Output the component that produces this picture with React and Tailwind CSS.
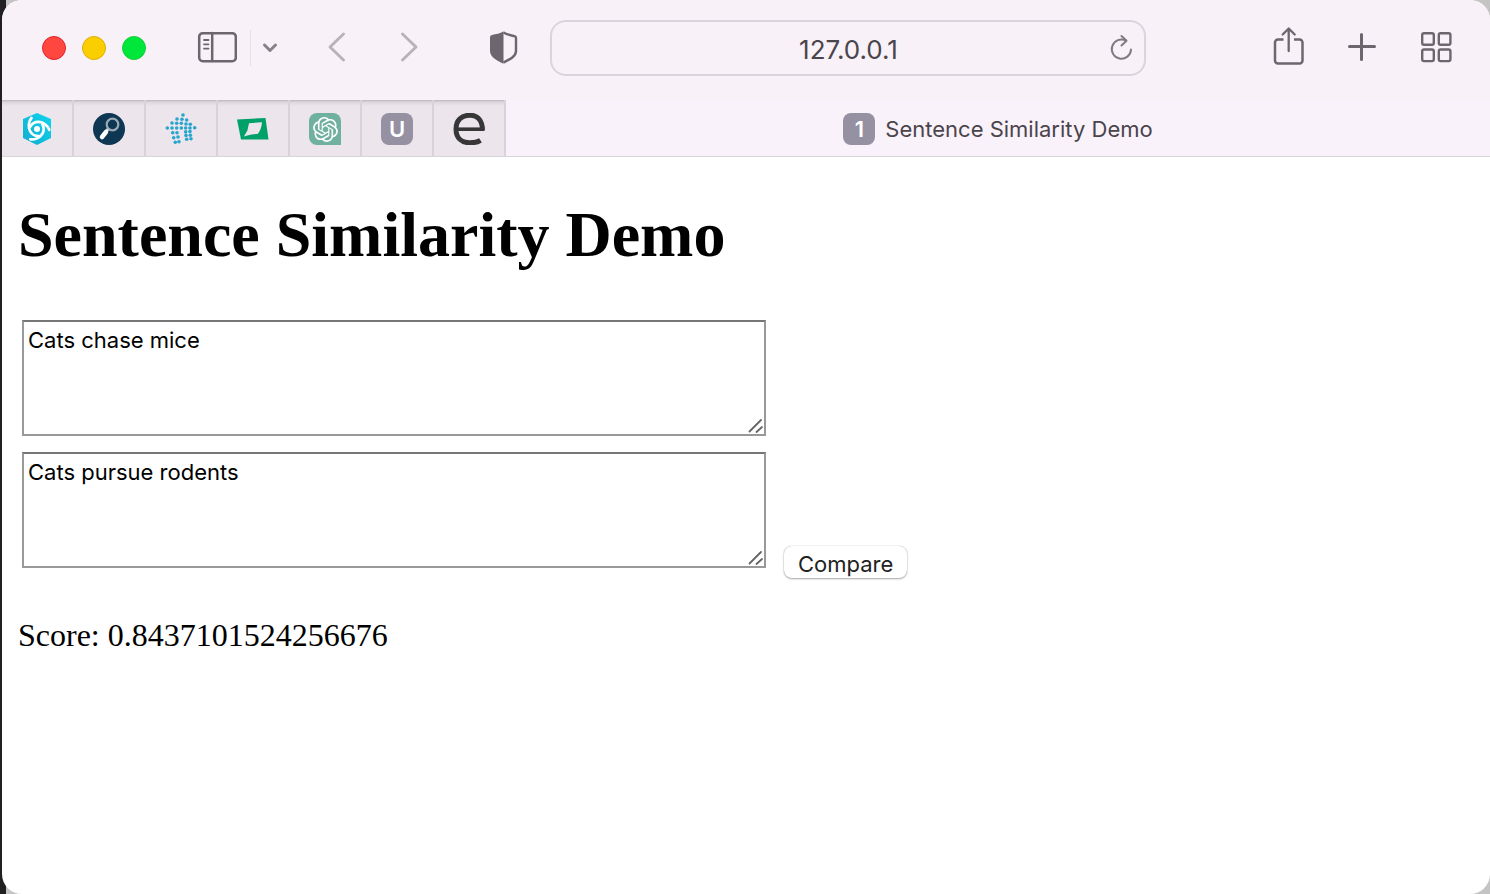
import { SiOpenai } from "react-icons/si";

const dots = [
  [18, 2], [12, 6], [17, 6.3], [21.7, 7],
  [7, 10], [11.7, 10.3], [16.3, 10.3], [21, 11], [25.3, 11.3],
  [2.3, 15], [7, 15], [11.7, 15], [16.3, 15], [20.7, 15], [25, 15], [29.7, 14.7],
  [7.7, 19.7], [12, 19.7], [20.7, 18.9], [25, 18.6], [21, 22.5], [25.3, 22.2],
  [8.7, 24.7], [13, 24], [21.7, 26.3], [26, 25.7], [10.3, 29.3], [14, 28.7],
];

function HexIcon() {
  return (
    <svg width="32" height="32" viewBox="0 0 32 32" fill="none">
      <defs>
        <linearGradient id="hex" x1="0" y1="1" x2="1" y2="0">
          <stop offset="0" stopColor="#12acd0" />
          <stop offset="1" stopColor="#0fd5ec" />
        </linearGradient>
      </defs>
      <path d="M16 0 30 6v19l-14 7L2 25V6Z" fill="url(#hex)" />
      <circle cx="16" cy="16" r="3" fill="#fff" />
      <g stroke="#fff" strokeWidth="2.700" strokeLinecap="round">
        <path d="M10.500 5C7.500 8.500 7 14 9 18c1.500 3 4.500 5 8.500 5" />
        <path d="M10.500 5C7.500 8.500 7 14 9 18c1.500 3 4.500 5 8.500 5" transform="rotate(120 16 16)" />
        <path d="M10.500 5C7.500 8.500 7 14 9 18c1.500 3 4.500 5 8.500 5" transform="rotate(240 16 16)" />
      </g>
    </svg>
  );
}

function LensIcon() {
  return (
    <svg width="32" height="32" viewBox="0 0 32 32" fill="none">
      <circle cx="16" cy="16" r="16" fill="#0d3753" />
      <circle cx="19.500" cy="11.500" r="5.800" stroke="#9aa9b4" strokeWidth="2.200" />
      <path d="m15 16-2 3" stroke="#d9dfe3" strokeWidth="3" />
      <path d="m13 19-4 5" stroke="#fff" strokeWidth="4.500" strokeLinecap="round" />
    </svg>
  );
}

function DotsIcon() {
  return (
    <svg width="32" height="32" viewBox="0 0 32 32" fill="#27a5cf">
      {dots.map(([x, y]) => (
        <circle key={`${x}-${y}`} cx={x} cy={y} r="1.800" />
      ))}
    </svg>
  );
}

function FlagIcon() {
  return (
    <svg width="32" height="32" viewBox="0 0 32 32">
      <path d="M0 6.500 28.500 5 31.500 26.500H4Z" fill="#00a069" />
      <path d="M12 10.200 25 9.200c-.4 5-1.700 8.500-4.300 11.800-4 .1-8.200.6-13.700 2.600 1.200-2.800 2.600-4.200 3.400-6Z" fill="#ece6ec" />
    </svg>
  );
}

function ChatIcon() {
  return (
    <span className="flex size-8 items-center justify-center rounded-lg rounded-br-none bg-[#70b09e] text-white">
      <SiOpenai size={25} />
    </span>
  );
}

function LetterIcon({ children }) {
  return (
    <span className="flex size-8 shrink-0 items-center justify-center rounded-lg bg-[#9591a3] text-[22px] leading-none font-semibold text-white">
      {children}
    </span>
  );
}

function EIcon() {
  return (
    <svg width="32" height="32" viewBox="0 0 32 32" fill="none" stroke="#373737">
      <path d="M3 16.200h28" strokeWidth="3.600" />
      <path d="M29.500 17.500C29.500 8 25 2.200 17 2.200 8 2.200 3 8 3 16c0 9 5.500 13.800 14 13.800 4 0 7.500-.6 10.500-2.500" strokeWidth="5" />
    </svg>
  );
}

const pinned = [
  ["Hexagon site", <HexIcon />],
  ["Search site", <LensIcon />],
  ["Dots site", <DotsIcon />],
  ["Green site", <FlagIcon />],
  ["ChatGPT", <ChatIcon />],
  ["U site", <LetterIcon>U</LetterIcon>],
  ["E site", <EIcon />],
];

function Toolbar() {
  return (
    <header className="flex h-[100px] items-center bg-[#f8f1f8] pr-[38px] pb-1 pl-10 text-[#6e666e]">
      <div className="flex gap-4">
        <button aria-label="Close" className="size-6 rounded-full border border-[#e0242b] bg-[#ff473f]" />
        <button aria-label="Minimize" className="size-6 rounded-full border border-[#dfae0c] bg-[#fbce00]" />
        <button aria-label="Zoom" className="size-6 rounded-full border border-[#12cf38] bg-[#00e73c]" />
      </div>
      <button aria-label="Show sidebar" className="ml-[51px]">
        <svg width="40" height="34" viewBox="0 0 40 34" fill="none" stroke="currentColor" strokeWidth="2.500" strokeLinecap="round">
          <rect x="2.200" y="2.200" width="36.600" height="28" rx="3.500" />
          <path d="M15.200 2v28" />
          <path d="M7 9h4.500M7 13.300h4.500M7 17.600h4.500" strokeWidth="1.800" />
        </svg>
      </button>
      <span className="ml-[13px] h-9 w-px bg-[#e8e0e8]" />
      <button aria-label="Sidebar options" className="ml-2.5 text-[#88818a]">
        <svg width="18" height="16" viewBox="0 0 18 16" fill="none" stroke="currentColor" strokeWidth="3" strokeLinecap="round" strokeLinejoin="round">
          <path d="m3.500 5 5.500 5.500L14.500 5" />
        </svg>
      </button>
      <button aria-label="Back" className="ml-[47px] text-[#b9b2b9]">
        <svg width="20" height="34" viewBox="0 0 20 34" fill="none" stroke="currentColor" strokeWidth="2.900" strokeLinecap="round" strokeLinejoin="round">
          <path d="M17.500 3 4 16l13.500 13" />
        </svg>
      </button>
      <button aria-label="Forward" className="ml-[53px] text-[#b9b2b9]">
        <svg width="20" height="34" viewBox="0 0 20 34" fill="none" stroke="currentColor" strokeWidth="2.900" strokeLinecap="round" strokeLinejoin="round">
          <path d="M3.500 3 17 16 3.500 29" />
        </svg>
      </button>
      <button aria-label="Privacy report" className="ml-[69px]">
        <svg width="30" height="34" viewBox="0 0 30 34" fill="none">
          <path d="M15.500.2C12 2.500 8 3 4 4c-1 .2-2 1-2 2.200V20c0 6.500 8 10 13.500 12.800Z" fill="currentColor" />
          <path d="M15.500 1.500c3.500 2.200 7.500 2.700 11 3.700.7.200 1.500.8 1.500 1.800v13c0 5.500-6.500 8.500-12.500 11.500" stroke="currentColor" strokeWidth="2.400" />
        </svg>
      </button>
      <div className="ml-8 flex h-14 flex-1 items-center rounded-2xl border-2 border-[#dcd4dc] pr-[11px] pl-9">
        <input
          aria-label="Address"
          defaultValue="127.0.0.1"
          className="h-10 min-w-0 flex-1 bg-transparent pt-0.5 text-center text-[26px] text-[#4a444b] outline-none"
        />
        <button aria-label="Reload" className="text-[#817a82]">
          <svg width="24" height="28" viewBox="0 0 24 28" fill="none" stroke="currentColor" strokeWidth="2" strokeLinecap="round" strokeLinejoin="round">
            <path d="M22 15.500A9.600 9.600 0 1 1 17 6.700" />
            <path d="M12.500 2 17.500 6.700 12.500 11.500" />
          </svg>
        </button>
      </div>
      <button aria-label="Share" className="ml-[127px] pb-1">
        <svg width="31" height="40" viewBox="0 0 31 40" fill="none" stroke="currentColor" strokeWidth="2.500" strokeLinecap="round" strokeLinejoin="round">
          <path d="M10.500 13.500H5a3 3 0 0 0-3 3v18a3 3 0 0 0 3 3h21.500a3 3 0 0 0 3-3v-18a3 3 0 0 0-3-3H21" strokeLinecap="butt" />
          <path d="M15.700 25V3M9.700 8.500l6-6 6 6" strokeWidth="2.300" />
        </svg>
      </button>
      <button aria-label="New tab" className="ml-11">
        <svg width="28" height="30" viewBox="0 0 28 30" fill="none" stroke="currentColor" strokeWidth="3" strokeLinecap="round">
          <path d="M13.500 1.500v25M1.500 13.500h25" />
        </svg>
      </button>
      <button aria-label="Tab overview" className="ml-[45px]">
        <svg width="31" height="32" viewBox="0 0 31 32" fill="none" stroke="currentColor" strokeWidth="2.400">
          <rect x="1.200" y="1.200" width="11.600" height="11.600" rx="1.800" />
          <rect x="17.800" y="1.200" width="11.600" height="11.600" rx="1.800" />
          <rect x="1.200" y="17.500" width="11.600" height="11.600" rx="1.800" />
          <rect x="17.800" y="17.500" width="11.600" height="11.600" rx="1.800" />
        </svg>
      </button>
    </header>
  );
}

function TabBar() {
  return (
    <nav aria-label="Tabs" className="flex h-[57px] border-b border-[#d8d5d8] bg-[#faf2fa]">
      {pinned.map(([name, icon]) => (
        <button
          key={name}
          aria-label={name}
          className="flex w-[72px] shrink-0 items-center justify-center border-r-2 border-[#dad2da] bg-[#ece6ec] bg-[linear-gradient(#bdb6bd,#dcd5dc_2px,#ece6ec_6px)] pt-0.5"
        >
          {icon}
        </button>
      ))}
      <button className="flex flex-1 items-center justify-center gap-2.5 pt-0.5 text-[22px] text-[#4a444b]">
        <LetterIcon>1</LetterIcon>
        Sentence Similarity Demo
      </button>
    </nav>
  );
}

function SentenceBox({ label, value }) {
  return (
    <div className="relative m-1 h-[116px] w-[744px] max-w-full">
      <textarea
        aria-label={label}
        defaultValue={value}
        className="block size-full resize-none border-2 border-[#999] border-t-[#767676] bg-white px-1 py-1 font-[Inter,sans-serif] text-[22px] leading-7 text-black outline-none"
      />
      <svg className="pointer-events-none absolute right-[3px] bottom-[3px]" width="15" height="14" viewBox="0 0 15 14" stroke="#666" strokeWidth="1.800" strokeLinecap="round">
        <path d="M1.500 12.500 13 1M8.500 13 14 8" />
      </svg>
    </div>
  );
}

export default function App() {
  return (
    <div className="min-h-screen bg-[linear-gradient(90deg,#211f22_6px,#c4c4c4_6px)] pl-0.5 font-[Inter,sans-serif]">
      <div className="min-h-screen overflow-hidden rounded-[20px] bg-white">
        <Toolbar />
        <TabBar />
        <main className="px-4 pt-[42px] font-['Liberation_Serif',serif] text-black">
          <h1 className="text-[64px] leading-[72px] font-bold">Sentence Similarity Demo</h1>
          <form className="mt-[49px]" onSubmit={(event) => event.preventDefault()}>
            <SentenceBox label="First sentence" value="Cats chase mice" />
            <div className="mt-3 flex flex-wrap items-end gap-[14px]">
              <SentenceBox label="Second sentence" value="Cats pursue rodents" />
              <button className="-mb-1.5 h-8 rounded-lg bg-white px-3.5 pt-1 font-[Inter,sans-serif] text-[22px] leading-7 text-[#222] shadow-[0_0_1px_#999,0_1px_2px_#aaa]">
                Compare
              </button>
            </div>
          </form>
          <p className="mt-[45px] text-[32px] leading-9">Score: 0.8437101524256676</p>
        </main>
      </div>
    </div>
  );
}
